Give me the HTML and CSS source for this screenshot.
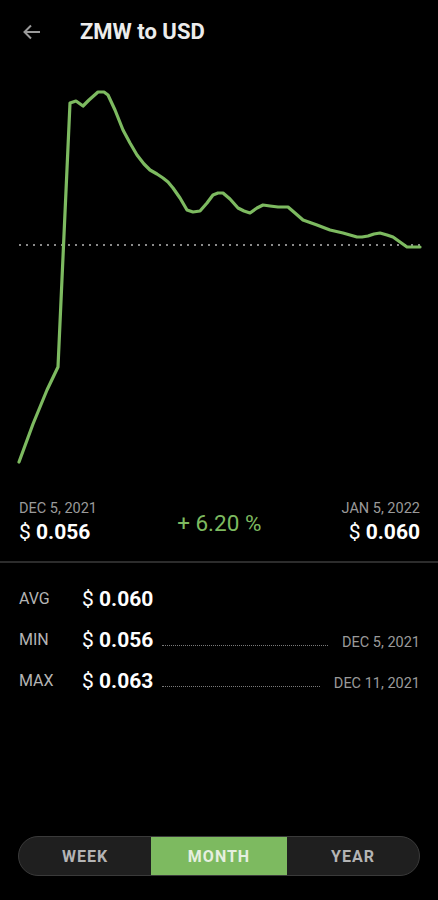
FILE: index.html
```html
<!DOCTYPE html>
<html>
<head>
<meta charset="utf-8">
<link rel="stylesheet" href="styles.css">
</head>
<body>
<div class="app">
  <header class="header">
    <svg class="back" width="20" height="20" viewBox="0 0 20 20"><path d="M18 10H3M9 3.5L2.5 10L9 16.5" fill="none" stroke="#9a9a9a" stroke-width="2"/></svg>
    <h1 class="title">ZMW to USD</h1>
  </header>
  <svg class="chart" width="438" height="437" viewBox="0 64 438 437">
    <line x1="19" y1="245" x2="420" y2="245" stroke="#8a8a8a" stroke-width="2" stroke-dasharray="2 5"/>
    <polyline fill="none" stroke="#7dba60" stroke-width="3.2" stroke-linejoin="round" stroke-linecap="round"
      points="19,462 33,424 47,390 58,367 70,103 76,101 83,106 89,100 98,92 104,92 108,95 115,110 123,130 130,143 137,155 144,164 150,170 157,174 163,178 168,182 173,188 180,198 187,210 193,212 200,211 207,203 213,195 218,193 223,193 230,199 238,208 244,211 250,213 257,208 263,205 270,206 278,207 288,207 295,213 303,220 317,225 330,230 343,233 350,235 357,237 362,237 368,236 374,234 380,233 387,235 393,237 400,242 407,247 413,247 420,247"/>
  </svg>
  <section class="summary">
    <div class="point">
      <div class="date">DEC 5, 2021</div>
      <div class="price"><span class="cur">$</span> <b>0.056</b></div>
    </div>
    <div class="change">+ 6.20 %</div>
    <div class="point right">
      <div class="date">JAN 5, 2022</div>
      <div class="price"><span class="cur">$</span> <b>0.060</b></div>
    </div>
  </section>
  <div class="divider"></div>
  <section class="stats">
    <div class="row">
      <span class="label">AVG</span>
      <span class="value"><span class="cur">$</span> <b>0.060</b></span>
    </div>
    <div class="row">
      <span class="label">MIN</span>
      <span class="value"><span class="cur">$</span> <b>0.056</b></span>
      <span class="leader"></span>
      <span class="when">DEC 5, 2021</span>
    </div>
    <div class="row">
      <span class="label">MAX</span>
      <span class="value"><span class="cur">$</span> <b>0.063</b></span>
      <span class="leader"></span>
      <span class="when">DEC 11, 2021</span>
    </div>
  </section>
  <nav class="segments">
    <div class="seg">WEEK</div>
    <div class="seg active">MONTH</div>
    <div class="seg">YEAR</div>
  </nav>
</div>
</body>
</html>
```
FILE: styles.css
```css
html, body {
  margin: 0;
  padding: 0;
  background: #000;
}
body {
  font-family: Roboto, "Liberation Sans", sans-serif;
  color: #fff;
}
.app {
  display: flex;
  flex-direction: column;
  min-height: 900px;
}
.header {
  height: 64px;
  display: flex;
  align-items: center;
  padding-left: 22px;
  box-sizing: border-box;
}
.back {
  display: block;
  margin-top: -1px;
}
.title {
  margin: 0 0 0 38px;
  font-size: 22px;
  font-weight: 700;
  color: #ececec;
  line-height: 28px;
}
.chart {
  display: block;
}
.summary {
  display: flex;
  justify-content: space-between;
  align-items: center;
  padding: 0 18px 0 19px;
}
.point .date {
  font-size: 14.5px;
  line-height: 16px;
  color: #9a9a9a;
}
.point.right {
  text-align: right;
}
.price {
  font-size: 21px;
  line-height: 24px;
  margin-top: 3px;
  color: #fff;
}
.price b, .value b {
  font-weight: 700;
}
.cur {
  font-weight: 400;
}
.change {
  font-size: 22.5px;
  color: #7dba60;
  margin-left: 0;
}
.divider {
  height: 2px;
  background: #2c2c2c;
  margin-top: 17px;
}
.stats {
  padding: 15px 18px 0 19px;
}
.row {
  height: 41px;
  display: flex;
  align-items: center;
}
.label {
  width: 63px;
  font-size: 16px;
  color: #b4b4b4;
}
.value {
  font-size: 21px;
  color: #fff;
  width: 80px;
}
.leader {
  flex: 1;
  border-bottom: 1.5px dotted #7a7a7a;
  margin: 12px 14px 0 0;
}
.when {
  font-size: 14.5px;
  color: #9a9a9a;
  margin-top: 6px;
}
.segments {
  margin: auto 18px 24px;
  height: 38px;
  display: grid;
  grid-template-columns: 132px 136px 1fr;
  border: 1px solid #3a3a3a;
  border-radius: 20px;
  background: #1f1f1f;
  overflow: hidden;
}
.seg {
  display: flex;
  align-items: center;
  justify-content: center;
  font-size: 16px;
  font-weight: 700;
  letter-spacing: 1px;
  color: #b4b4b4;
}
.seg.active {
  background: #7dba60;
  color: #e6efe0;
}
```
